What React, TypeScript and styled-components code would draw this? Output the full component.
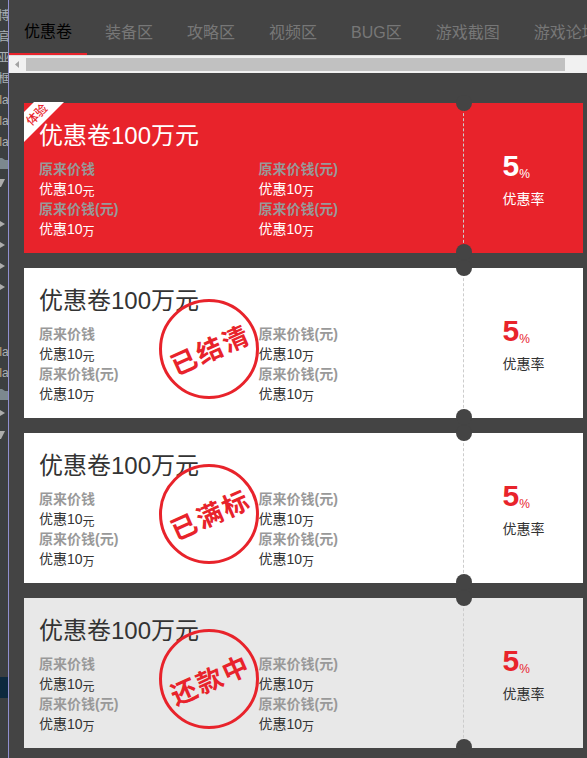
import React from "react";
import styled, { createGlobalStyle, css } from "styled-components";

const RED = "#e8232b";
const PAGE = "#444444";

const GlobalStyle = createGlobalStyle`
  *, *::before, *::after { box-sizing: border-box; }
  body {
    margin: 0;
    background: ${PAGE};
    font-family: "Liberation Sans", "Noto Sans CJK SC", sans-serif;
    font-size: 14px;
    line-height: 20px;
  }
`;

const Layout = styled.div`
  display: flex;
  height: 100vh;
  overflow: hidden;
`;

const Sidebar = styled.aside`
  flex: none;
  width: 9px;
  padding-top: 5px;
  overflow: hidden;
  background: #3c3f41;
  border-right: 1px solid #8f8fd0;
`;

const TreeRow = styled.div<{ $selected?: boolean }>`
  display: flex;
  align-items: center;
  justify-content: center;
  height: 21px;
  overflow: hidden;
  color: #a9b0b5;
  font-size: 12px;
  background: ${(p) => (p.$selected ? "#0d293e" : "transparent")};
`;

const Accent = styled.span`
  color: #c7a677;
`;

const TreeIcon = styled.svg`
  display: block;
  flex: none;
  width: 8px;
  height: 12px;
`;

const Main = styled.main`
  flex: 1;
  min-width: 0;
`;

const TabBar = styled.nav`
  display: flex;
  gap: 4px;
  height: 56px;
  padding-top: 8px;
  overflow: hidden;
  border-bottom: 1px solid #dddddd;
`;

const Tab = styled.button<{ $active?: boolean }>`
  flex: none;
  height: 48px;
  padding: 2px 16px 0 14px;
  border: 0;
  background: none;
  color: #777777;
  font: inherit;
  font-size: 16px;
  white-space: nowrap;
  ${(p) =>
    p.$active &&
    css`
      padding: 2px 15px 0;
      color: #000000;
      border-bottom: 3px solid ${RED};
    `}
`;

const ScrollTrack = styled.div`
  display: flex;
  align-items: center;
  height: 17px;
  padding-right: 22px;
  background: #f1f1f1;
`;

const ScrollArrow = styled.svg`
  flex: none;
  width: 17px;
  height: 17px;
`;

const ScrollThumb = styled.div`
  flex: 1;
  height: 13px;
  background: #c1c1c1;
`;

const CouponList = styled.div`
  display: flex;
  flex-direction: column;
  gap: 15px;
  padding: 30px 4px 10px 15px;
`;

type Tone = "red" | "white" | "gray";
const tones = {
  red: { bg: RED, text: "#ffffff", rate: "#ffffff" },
  white: { bg: "#ffffff", text: "#333333", rate: RED },
  gray: { bg: "#e8e8e8", text: "#333333", rate: RED },
};

const Card = styled.article<{ $tone: Tone }>`
  position: relative;
  display: flex;
  min-height: 150px;
  background: ${(p) => tones[p.$tone].bg};
  color: ${(p) => tones[p.$tone].text};
`;

const Details = styled.div`
  flex: 1;
  padding-top: 17px;
`;

const Title = styled.h2`
  margin: 0;
  padding: 0 15px;
  font-size: 24px;
  line-height: 32px;
  font-weight: 400;
`;

const Prices = styled.div`
  display: grid;
  grid-template-columns: 1fr 1fr;
  padding-top: 7px;
`;

const Price = styled.dl`
  margin: 0;
  padding-left: 15px;
`;

const PriceLabel = styled.dt`
  height: 20px;
  color: #999999;
  font-weight: 700;
`;

const PriceValue = styled.dd`
  height: 20px;
  margin: 0;
`;

const Unit = styled.sub`
  font-size: 12px;
  line-height: 0;
  vertical-align: -2px;
`;

const Rate = styled.div`
  position: relative;
  display: flex;
  flex: none;
  align-items: center;
  justify-content: center;
  width: 120px;
  border-left: 1px dashed #cccccc;

  &::before,
  &::after {
    content: "";
    position: absolute;
    left: -8px;
    width: 16px;
    height: 16px;
    border-radius: 50%;
    background: ${PAGE};
  }
  &::before { top: -8px; }
  &::after { bottom: -7px; }
`;

const RateValue = styled.div<{ $tone: Tone }>`
  color: ${(p) => tones[p.$tone].rate};
  line-height: 36px;
`;

const RateNumber = styled.strong`
  font-size: 30px;
`;

const Ribbon = styled.span`
  position: absolute;
  top: -1px;
  left: 0;
  display: flex;
  width: 40px;
  height: 40px;
  padding: 3px 0 0 1px;
  background: #ffffff;
  clip-path: polygon(10px 0, 40px 0, 0 40px, 0 10px);
`;

const RibbonText = styled.span`
  width: 24px;
  height: 20px;
  color: ${RED};
  font-size: 12px;
  font-weight: 500;
  white-space: nowrap;
  transform: rotate(-45deg);
`;

const Stamp = styled.div`
  position: absolute;
  top: 31px;
  left: 135px;
  display: flex;
  align-items: center;
  justify-content: center;
  width: 100px;
  height: 100px;
  border: 3px solid ${RED};
  border-radius: 50%;
  color: ${RED};
`;

const StampText = styled.span`
  display: flex;
  gap: 2px;
  font-family: "Noto Sans CJK SC", sans-serif;
  font-size: 26px;
  font-weight: 700;
  line-height: 32px;
  transform: rotate(-24deg);
`;

const tabs = ["优惠卷", "装备区", "攻略区", "视频区", "BUG区", "游戏截图", "游戏论坛"];

const prices = [
  { label: "原来价钱", unit: "元" },
  { label: "原来价钱(元)", unit: "万" },
  { label: "原来价钱(元)", unit: "万" },
  { label: "原来价钱(元)", unit: "万" },
];

const coupons: { tone: Tone; ribbon?: string; stamp?: string }[] = [
  { tone: "red", ribbon: "体验" },
  { tone: "white", stamp: "已结清" },
  { tone: "white", stamp: "已满标" },
  { tone: "gray", stamp: "还款中" },
];

const tree = [
  "博", "官", "亚", "框", "la", "la", "la", "folder", "open", "",
  "closed", "closed", "closed", "closed", "", "", "la", "la", "folder",
  "closed", "open", "", "", "", "", "", "", "", "", "", "", "", "selected",
];

function TreeItem({ kind }: { kind: string }) {
  if (kind === "la") return <TreeRow><Accent>l</Accent>a</TreeRow>;
  if (kind === "folder")
    return (
      <TreeRow>
        <TreeIcon viewBox="0 0 8 12"><path d="M0 1h2l3 2h3v9H0z" fill="#7c888f" /></TreeIcon>
      </TreeRow>
    );
  if (kind === "open")
    return (
      <TreeRow>
        <TreeIcon viewBox="0 0 8 12"><path d="M0 1h5L1 9H0z" fill="#adadad" /></TreeIcon>
      </TreeRow>
    );
  if (kind === "closed")
    return (
      <TreeRow>
        <TreeIcon viewBox="0 0 8 12"><path d="M0 1l5 3-5 3z" fill="#adadad" /></TreeIcon>
      </TreeRow>
    );
  if (kind === "selected") return <TreeRow $selected />;
  return <TreeRow>{kind}</TreeRow>;
}

export default function App() {
  const [active, setActive] = React.useState(0);
  return (
    <>
      <GlobalStyle />
      <Layout>
        <Sidebar>
          {tree.map((kind, i) => <TreeItem key={i} kind={kind} />)}
        </Sidebar>
        <Main>
          <TabBar>
            {tabs.map((tab, i) => (
              <Tab key={tab} type="button" $active={i === active} onClick={() => setActive(i)}>
                {tab}
              </Tab>
            ))}
          </TabBar>
          <ScrollTrack>
            <ScrollArrow viewBox="0 0 17 17"><path d="M10 5v7L6 8.5z" fill="#a3a3a3" /></ScrollArrow>
            <ScrollThumb />
          </ScrollTrack>
          <CouponList>
            {coupons.map((c, i) => (
              <Card key={i} $tone={c.tone}>
                <Details>
                  <Title>优惠卷100万元</Title>
                  <Prices>
                    {prices.map((p, k) => (
                      <Price key={k}>
                        <PriceLabel>{p.label}</PriceLabel>
                        <PriceValue>优惠10<Unit>{p.unit}</Unit></PriceValue>
                      </Price>
                    ))}
                  </Prices>
                </Details>
                <Rate>
                  <div>
                    <RateValue $tone={c.tone}><RateNumber>5</RateNumber><Unit>%</Unit></RateValue>
                    <div>优惠率</div>
                  </div>
                </Rate>
                {c.ribbon && <Ribbon><RibbonText>{c.ribbon}</RibbonText></Ribbon>}
                {c.stamp && <Stamp><StampText>{Array.from(c.stamp).map((ch) => <span key={ch}>{ch}</span>)}</StampText></Stamp>}
              </Card>
            ))}
          </CouponList>
        </Main>
      </Layout>
    </>
  );
}
